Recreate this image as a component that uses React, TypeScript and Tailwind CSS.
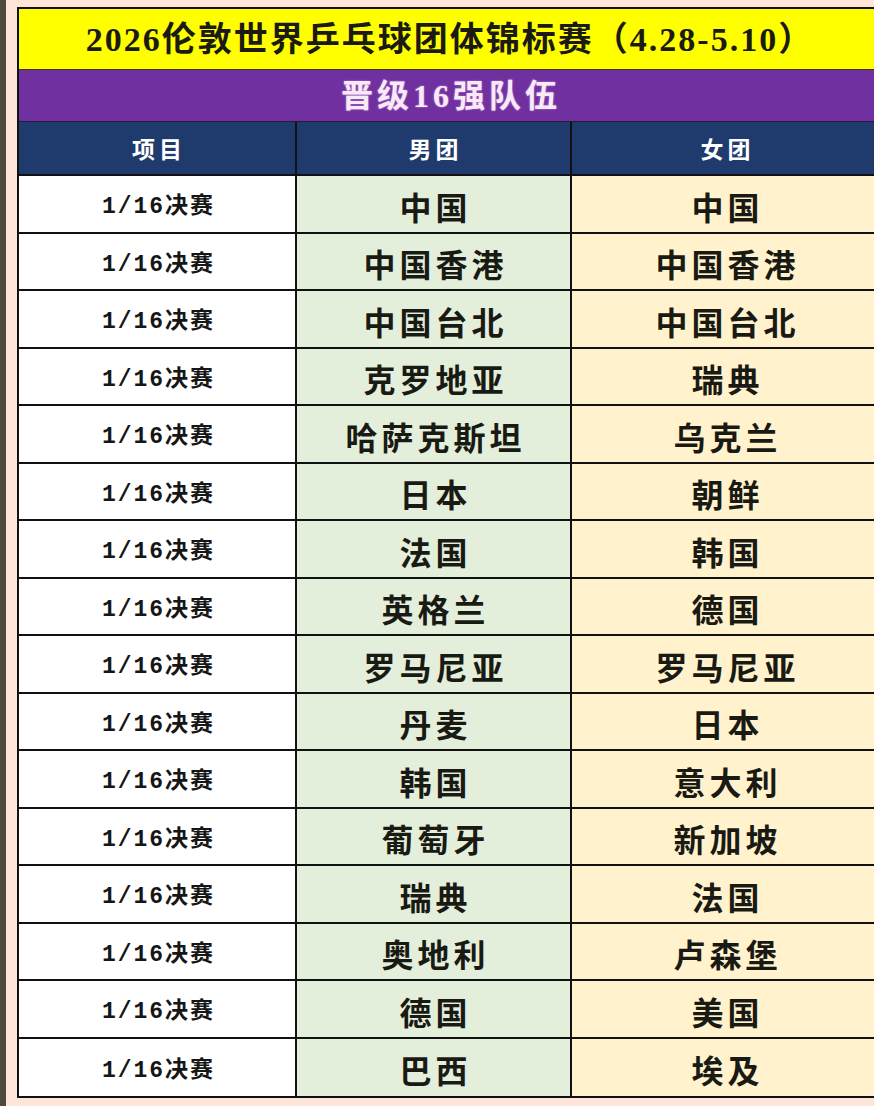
import React from 'react'

const ROWS: [string, string][] = [
  ['中国', '中国'],
  ['中国香港', '中国香港'],
  ['中国台北', '中国台北'],
  ['克罗地亚', '瑞典'],
  ['哈萨克斯坦', '乌克兰'],
  ['日本', '朝鲜'],
  ['法国', '韩国'],
  ['英格兰', '德国'],
  ['罗马尼亚', '罗马尼亚'],
  ['丹麦', '日本'],
  ['韩国', '意大利'],
  ['葡萄牙', '新加坡'],
  ['瑞典', '法国'],
  ['奥地利', '卢森堡'],
  ['德国', '美国'],
  ['巴西', '埃及'],
]

const CJK = "font-['Noto_Sans_CJK_SC',sans-serif]"

export default function App() {
  return (
    <div className="w-[874px] h-[1106px] overflow-hidden flex bg-[#fde5d9]">
      {/* dark edge of the window */}
      <div className="w-[6px] shrink-0 bg-[#4f4a3d]" />

      <div className="pl-[11px] pt-[7px]">
        <div className="w-[864px] border-2 border-[#111] flex flex-col">
          {/* Title */}
          <div className="h-[61px] bg-[#ffff00] border-b border-[#3a3a1a] flex items-center justify-center">
            <span className="font-['Liberation_Serif','Noto_Sans_CJK_SC',serif] font-bold text-[34px] tracking-[2px] text-[#1b1b14] pl-[2px]">
              2026伦敦世界乒乓球团体锦标赛（4.28-5.10）
            </span>
          </div>

          {/* Subtitle */}
          <div className="h-[52px] bg-[#7030a0] border-b border-[#2a1640] flex items-center justify-center">
            <span className="font-['Liberation_Serif','Noto_Sans_CJK_SC',serif] font-bold text-[32px] tracking-[4px] pl-[4px] text-[#f7e9f5] [text-shadow:0_0_2px_rgba(255,200,255,0.6)]">
              晋级16强队伍
            </span>
          </div>

          {/* Column header */}
          <div className="h-[54px] bg-[#1f3a6c] border-b-2 border-[#111] grid grid-cols-[278px_275px_1fr]">
            {['项目', '男团', '女团'].map((h, i) => (
              <div
                key={h}
                className={`flex items-center justify-center ${i < 2 ? 'border-r-2 border-[#111]' : ''}`}
              >
                <span className={`${CJK} font-bold text-[23px] tracking-[4px] pl-[4px] text-white`}>{h}</span>
              </div>
            ))}
          </div>

          {/* Rows */}
          {ROWS.map(([men, women], i) => (
            <div
              key={i}
              className="h-[57.5px] grid grid-cols-[278px_275px_1fr] border-b-2 border-[#111] last:border-b-0"
            >
              <div className="bg-white border-r-2 border-[#111] flex items-center justify-center pt-[7px]">
                <span className="font-['Liberation_Mono','Noto_Sans_CJK_SC',monospace] font-bold text-[23px] tracking-[2px] pl-[3px] text-[#161616]">
                  1/16决赛
                </span>
              </div>
              <div className="bg-[#e3efda] border-r-2 border-[#111] flex items-center justify-center pt-[4px]">
                <span className={`${CJK} font-semibold text-[32px] tracking-[4px] pl-[4px] text-[#1a1a14]`}>{men}</span>
              </div>
              <div className="bg-[#fff2cd] flex items-center justify-center pt-[4px]">
                <span className={`${CJK} font-semibold text-[32px] tracking-[4px] pl-[4px] text-[#1a1a14]`}>{women}</span>
              </div>
            </div>
          ))}
        </div>
      </div>
    </div>
  )
}
